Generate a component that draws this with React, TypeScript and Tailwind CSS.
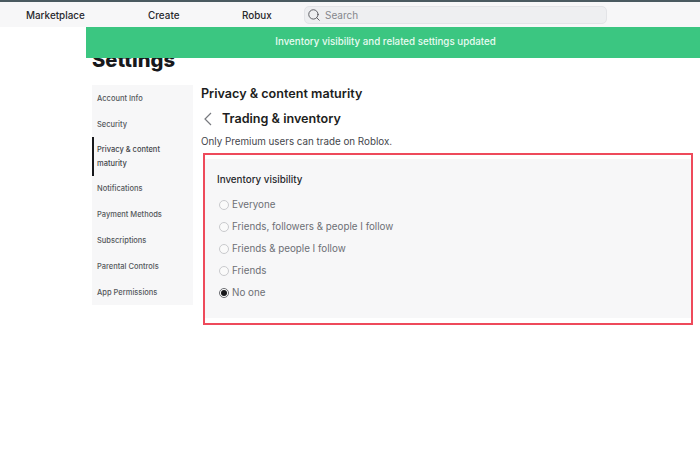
import { Search } from 'lucide-react';

const NAV_ITEMS = [
    { label: 'Marketplace', className: 'w-[122px] pl-[26px]' },
    { label: 'Create', className: 'w-[94px] pl-[26px]' },
    { label: 'Robux', className: 'w-[87px] pl-[26px]' },
];

const SIDEBAR_ITEMS = [
    { label: 'Account Info' },
    { label: 'Security' },
    { label: 'Privacy & content maturity', active: true },
    { label: 'Notifications' },
    { label: 'Payment Methods' },
    { label: 'Subscriptions' },
    { label: 'Parental Controls' },
    { label: 'App Permissions' },
];

const OPTIONS = ['Everyone', 'Friends, followers & people I follow', 'Friends & people I follow', 'Friends', 'No one'];

export default function App() {
    return (
        <div className="relative h-[450px] w-[700px] overflow-hidden bg-white font-['Inter',sans-serif] text-[#1c1d20]">
            <div className="h-[2px] bg-[#4a5a60]" />
            <header className="flex h-[25px] items-center bg-[#f7f7f8] pt-[1px]">
                {NAV_ITEMS.map((item) => (
                    <div key={item.label} className={`${item.className} text-[9.9px] font-medium text-[#27282c]`}>
                        {item.label}
                    </div>
                ))}
                <div className="ml-[1px] flex h-[18px] w-[303px] items-center gap-[4px] rounded-[5px] border border-[#e3e4e7] bg-[#eeeff1] pl-[2px]">
                    <Search size={14} strokeWidth={1.5} className="text-[#4b4d52]" />
                    <span className="text-[10px] text-[#85878c]">Search</span>
                </div>
            </header>

            <div className="absolute left-[86px] right-0 top-[27px] flex h-[31px] items-center justify-center bg-[#3bc681] pr-[15px] text-[9.75px] font-medium text-[#e9fbf2]">
                Inventory visibility and related settings updated
            </div>

            <div className="pl-[92px]">
                <h1 className="mt-[18px] h-[40px] text-[20.2px] font-extrabold leading-[30px] text-[#17181b]">Settings</h1>
                <div className="flex">
                    <nav className="flex h-[220px] w-[101px] flex-col bg-[#f7f7f8]">
                        {SIDEBAR_ITEMS.map((item) => (
                            <div
                                key={item.label}
                                className={
                                    item.active
                                        ? 'flex h-[39px] items-center border-l-[2px] border-[#17181b] pl-[3px] pr-[20px] pt-[2px] text-[7.5px] font-medium leading-[14px] text-[#44464b]'
                                        : 'flex h-[26px] items-center pl-[5px] pt-[1px] text-[7.5px] font-medium text-[#55575c]'
                                }
                            >
                                {item.label}
                            </div>
                        ))}
                    </nav>

                    <main className="ml-[8px] flex-1">
                        <h2 className="text-[12.6px] font-semibold leading-[18px] text-[#1c1d20]">Privacy &amp; content maturity</h2>
                        <div className="mt-[7px] flex h-[18px] items-center">
                            <svg width="9" height="14" viewBox="0 0 9 14" fill="none" className="ml-[2px] text-[#77797e]">
                                <path d="M8 1 L2 7 L8 13" stroke="currentColor" strokeWidth="1.2" />
                            </svg>
                            <span className="ml-[10px] text-[12.6px] font-semibold text-[#1c1d20]">Trading &amp; inventory</span>
                        </div>
                        <p className="mt-[7px] text-[9.8px] leading-[14px] text-[#44464b]">Only Premium users can trade on Roblox.</p>

                        <section className="ml-[2px] mt-[4px] h-[172px] w-[490px] border-2 border-[#ee4a5b] bg-white pb-[5px] pt-[4px]">
                            <div className="h-[159px] bg-[#f7f7f8] pl-[12px] pr-0 pt-[14px]">
                                <h3 className="text-[9.8px] font-medium leading-[14px] text-[#27282c]">Inventory visibility</h3>
                                <div className="mt-[7px] flex flex-col">
                                    {OPTIONS.map((option) => {
                                        const checked = option === 'No one';
                                        return (
                                            <div key={option} className="flex h-[22px] items-center gap-[3px] pl-[2px]">
                                                <span
                                                    className={
                                                        checked
                                                            ? 'flex h-[10px] w-[10px] items-center justify-center rounded-full border border-[#6a6c71] bg-white'
                                                            : 'h-[10px] w-[10px] rounded-full border border-[#c9cacd] bg-[#fafafa]'
                                                    }
                                                >
                                                    {checked && <span className="h-[6px] w-[6px] rounded-full bg-[#17181b]" />}
                                                </span>
                                                <span className="text-[9.8px] text-[#6d6f75]">{option}</span>
                                            </div>
                                        );
                                    })}
                                </div>
                            </div>
                        </section>
                    </main>
                </div>
            </div>
        </div>
    );
}
